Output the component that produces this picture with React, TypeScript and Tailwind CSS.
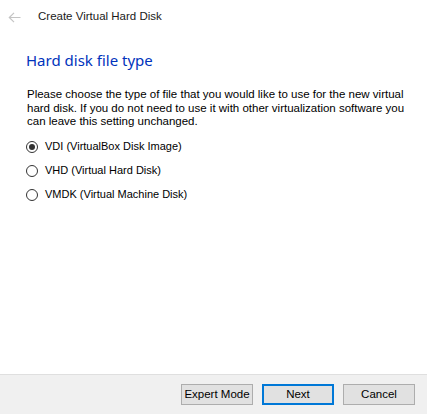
import { useState } from 'react'

const OPTIONS = [
  { id: 'vdi', label: 'VDI (VirtualBox Disk Image)' },
  { id: 'vhd', label: 'VHD (Virtual Hard Disk)' },
  { id: 'vmdk', label: 'VMDK (Virtual Machine Disk)' },
]

function Radio({ checked }: { checked: boolean }) {
  return (
    <span className="w-[12px] h-[12px] rounded-full border border-[#333333] bg-white flex items-center justify-center shrink-0">
      {checked && <span className="w-[6px] h-[6px] rounded-full bg-[#333333]" />}
    </span>
  )
}

export default function App() {
  const [format, setFormat] = useState('vdi')

  return (
    <div
      className="w-[427px] h-[414px] flex flex-col bg-white text-black"
      style={{ fontFamily: '"Liberation Sans", Arial, sans-serif' }}
    >
      {/* 타이틀 바 */}
      <div className="h-[34px] flex items-center pl-[8px] shrink-0">
        <svg width="13" height="11" viewBox="0 0 13 11" fill="none" className="text-[#c4c4c4]">
          <path d="M6 0.8 L1.3 5.5 L6 10.2 M1.3 5.5 H12.5" stroke="currentColor" strokeWidth="1.2" />
        </svg>
        <span className="ml-[17px] text-[11.5px] text-[#1a1a1a]">Create Virtual Hard Disk</span>
      </div>

      {/* 본문 */}
      <div className="flex-1 flex flex-col pl-[26px] pr-[16px]">
        <h1
          className="mt-[16px] text-[15px] leading-[20px] text-[#0033bc]"
          style={{ fontFamily: '"Noto Sans", sans-serif' }}
        >
          Hard disk file type
        </h1>
        <p className="mt-[18px] pl-[1px] text-[11.5px] leading-[13.5px] text-black">
          Please choose the type of file that you would like to use for the new virtual hard disk. If you do not need
          to use it with other virtualization software you can leave this setting unchanged.
        </p>
        <div className="mt-[9px] flex flex-col gap-[6px]">
          {OPTIONS.map((o) => (
            <label
              key={o.id}
              onClick={() => setFormat(o.id)}
              className="h-[18px] flex items-center gap-[7px] text-[11px] cursor-default"
            >
              <Radio checked={format === o.id} />
              <span>{o.label}</span>
            </label>
          ))}
        </div>
      </div>

      {/* 하단 버튼 */}
      <div className="h-[40px] shrink-0 border-t border-[#dfdfdf] bg-[#f0f0f0] flex items-start justify-end gap-[9px] pt-[9px] pr-[12px]">
        <button className="w-[72px] h-[21px] border border-[#adadad] bg-[#e1e1e1] text-[11.5px] leading-none">
          Expert Mode
        </button>
        <button className="w-[72px] h-[21px] border-2 border-[#0078d7] bg-[#e1e1e1] text-[11.5px] leading-none">
          Next
        </button>
        <button className="w-[72px] h-[21px] border border-[#adadad] bg-[#e1e1e1] text-[11.5px] leading-none">
          Cancel
        </button>
      </div>
    </div>
  )
}
